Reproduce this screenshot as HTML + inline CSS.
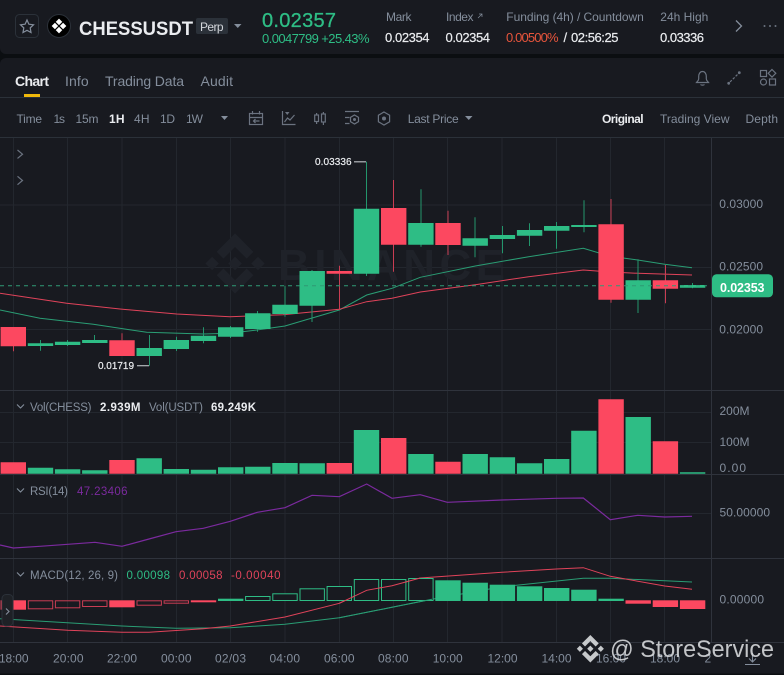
<!DOCTYPE html>
<html><head><meta charset="utf-8"><title>CHESSUSDT</title>
<style>
html,body{margin:0;padding:0;background:#0b0e11;width:784px;height:675px;overflow:hidden}
svg{display:block;font-family:"Liberation Sans",sans-serif}
.g{fill:#848e9c}.w{fill:#eaecef}.gr{fill:#2ebd85}.r{fill:#f6465d}
.s12{font-size:12px}.s11{font-size:11.5px}.b{font-weight:bold}
.ic{fill:none;stroke:#6b7380;stroke-width:1.2}
</style></head><body>
<svg width="784" height="675" viewBox="0 0 784 675" xmlns="http://www.w3.org/2000/svg">
<rect width="784" height="675" fill="#0b0e11"/>
<path d="M0 0H784V54H6a6 6 0 0 1-6-6z" fill="#181a20"/>
<path d="M6 58H784V673.5H0V64a6 6 0 0 1 6-6z" fill="#181a20"/>

<!-- header -->
<rect x="15.5" y="14.5" width="23" height="23" rx="4" fill="none" stroke="#2b3139"/>
<polygon points="27,20 28.9,24.2 33.5,24.8 30.2,27.9 31,32.5 27,30.3 23,32.5 23.8,27.9 20.5,24.8 25.1,24.2" fill="none" stroke="#848e9c" stroke-width="1.2"/>
<circle cx="59" cy="26" r="11.5" fill="#000" stroke="#2b3139"/>
<g fill="#fff"><rect x="56.7" y="19.6" width="4.6" height="4.6" transform="rotate(45 59 21.9)"/><rect x="56.7" y="27.8" width="4.6" height="4.6" transform="rotate(45 59 30.1)"/><rect x="52.6" y="23.7" width="4.6" height="4.6" transform="rotate(45 54.9 26)"/><rect x="60.8" y="23.7" width="4.6" height="4.6" transform="rotate(45 63.1 26)"/></g>
<text x="79" y="35" font-size="19" class="b" fill="#eaecef" textLength="114" lengthAdjust="spacingAndGlyphs">CHESSUSDT</text>
<rect x="196" y="18" width="32" height="16" rx="2" fill="#2b3139"/>
<text x="200" y="31" class="s12" fill="#d3d6db" textLength="23.5">Perp</text>
<path d="M234 24h7.5l-3.75 4z" fill="#848e9c"/>
<text x="262" y="27" font-size="20" class="gr" stroke="#2ebd85" stroke-width=".3" textLength="74">0.02357</text>
<text x="262" y="43" font-size="13" class="gr" textLength="107.5">0.0047799 +25.43%</text>
<text x="386" y="21" class="g s12" textLength="25.5">Mark</text>
<text x="385" y="42" font-size="13" class="w" stroke="#eaecef" stroke-width=".2" textLength="44.5">0.02354</text>
<text x="446" y="21" class="g s12" textLength="27.5">Index</text>
<path d="M478 18l4-4M479 14h3v3" fill="none" stroke="#848e9c" stroke-width=".7"/>
<text x="445.5" y="42" font-size="13" class="w" stroke="#eaecef" stroke-width=".2" textLength="44.5">0.02354</text>
<text x="506.3" y="21" class="g s12" textLength="137.5">Funding (4h) / Countdown</text>
<text x="506" y="42" font-size="13" fill="#e8553c" textLength="52.5">0.00500%</text>
<text x="563.5" y="42" font-size="13" class="w" stroke="#eaecef" stroke-width=".2">/</text>
<text x="571" y="42" font-size="13" class="w" stroke="#eaecef" stroke-width=".2" textLength="47.5">02:56:25</text>
<text x="660.3" y="21" class="g s12" textLength="48">24h High</text>
<text x="660" y="42" font-size="13" class="w" stroke="#eaecef" stroke-width=".2" textLength="44">0.03336</text>
<path d="M736 20.5l5.5 5.5-5.5 5.5" fill="none" stroke="#848e9c" stroke-width="1.3"/>
<g fill="#6b7380"><circle cx="764.5" cy="26" r="1"/><circle cx="770" cy="26" r="1"/><circle cx="775.5" cy="26" r="1"/></g>

<!-- tabs -->
<text x="15" y="86" font-size="14" class="w b" textLength="34">Chart</text>
<text x="65" y="86" font-size="14" class="g" textLength="23.7">Info</text>
<text x="105" y="86" font-size="14" class="g" textLength="79">Trading Data</text>
<text x="200.5" y="86" font-size="14" class="g" textLength="32.5">Audit</text>
<rect x="24" y="94" width="16" height="3" fill="#f0b90b"/>
<rect x="0" y="97" width="784" height="1" fill="#2b3139"/>
<g fill="none" stroke="#6b7380" stroke-width="1.2">
<path d="M696.5 82.5c.7-1 2.2-2 2.2-3.6v-2.4c0-2.7 1.4-5 3.8-5s3.8 2.3 3.8 5v2.4c0 1.600 1.500 2.600 2.200 3.600zM700.500 84.500c.8.800 3.200.800 4 0"/>
<path d="M730 82l8-8" stroke-dasharray="2.500 1.500"/>
<rect x="760.500" y="70.500" width="6" height="6"/><path d="M772 69.500l3.800 3.800-3.800 3.800-3.800-3.800z"/><circle cx="763.500" cy="82" r="3"/><rect x="769.500" y="79" width="6" height="6"/>
</g>
<g fill="#6b7380"><circle cx="728.700" cy="83.300" r="1.400"/><circle cx="739.300" cy="72.700" r="1.400"/></g>

<!-- toolbar -->
<g class="s12">
<text x="16.500" y="123" class="g" textLength="25.500">Time</text>
<text x="53.500" y="123" class="g" textLength="11.500">1s</text>
<text x="75.500" y="123" class="g" textLength="23">15m</text>
<text x="109" y="123" class="w b" textLength="15.500">1H</text>
<text x="134" y="123" class="g" textLength="15.500">4H</text>
<text x="160" y="123" class="g" textLength="15">1D</text>
<text x="186" y="123" class="g" textLength="17">1W</text>
<text x="407.700" y="123" class="g" textLength="51">Last Price</text>
<text x="602" y="123" class="w b" textLength="41.600">Original</text>
<text x="660" y="123" class="g" textLength="69.500">Trading View</text>
<text x="745.500" y="123" class="g" textLength="32.500">Depth</text>
</g>
<path d="M221 116h7l-3.500 4z" fill="#848e9c"/>
<path d="M465 116h7.500l-3.750 4z" fill="#848e9c"/>
<g class="ic">
<rect x="249.500" y="113.500" width="13" height="11"/><path d="M249.500 117.500h13M252.500 111v3.500M259.500 111v3.500M259.500 121h-6M255.500 119l-2 2 2 2"/>
<path d="M282.500 111v13.500h13M284.500 122l3-4 2.500 2 4.500-5"/>
<rect x="314.700" y="115" width="3.800" height="6.500"/><path d="M316.600 113v2M316.600 121.500v2.500"/><rect x="321.500" y="114" width="3.800" height="8"/><path d="M323.400 112v2M323.400 122v3"/>
<path d="M345 111.500h14M345 117.500h4.500M345 123.500h4.500"/><polygon points="354.500,115 358.500,117.300 358.500,121.700 354.500,124 350.500,121.700 350.500,117.300"/>
<polygon points="384,112 389.600,115.200 389.600,121.800 384,125 378.400,121.800 378.400,115.200"/>
</g>
<path d="M285 112h4.500l-2.250 3z" fill="#6b7380"/>
<circle cx="354.500" cy="119.500" r="1.500" fill="#6b7380"/><circle cx="384" cy="118.500" r="2" fill="#6b7380"/>
<rect x="0" y="137" width="784" height="1" fill="#2b3139"/>

<!-- grid -->
<path d="M13.500 138V642M67.500 138V642M122 138V642M176.500 138V642M230.500 138V642M285 138V642M339.500 138V642M393.500 138V642M447.500 138V642M502 138V642M556.500 138V642M610.500 138V642M664.500 138V642M0 205H711M0 267.500H711M0 329.500H711M0 412.500H711M0 442.500H711M0 513.500H711" stroke="#23272e" stroke-width="1" fill="none"/>
<path d="M0 390.500H784M0 474.500H784M0 558.500H784M0 642.500H784M711.500 138V642" stroke="#2f333c" stroke-width="1" fill="none"/>

<!-- watermark -->
<path transform="translate(205.600 234.100) scale(.46)" fill="#1f2229" d="M38.730 53.200L64 27.950l25.280 25.280 14.700-14.700L64-1.450 24.030 38.500l14.700 14.700zM-.5 64l14.700-14.700L28.900 64 14.200 78.700zm39.230 10.800L64 100.050l25.280-25.280 14.710 14.700L64 129.450 24.030 89.500l-.02-.02 14.720-14.680zM99.100 64l14.700-14.700 14.700 14.700-14.700 14.700zM78.910 64L64 49.090 53 60.100l-1.270 1.260-2.600 2.600L64 78.920 78.910 64z"/>
<text x="278" y="280" font-size="44" class="b" fill="#1f2229" textLength="227">BINANCE</text>

<!-- MA lines -->
<polyline fill="none" stroke="#2a9d74" stroke-width="1" points="0,310 40,318.300 93.300,324.300 146.700,332.300 203.300,334 230,333.300 256.700,330 285,326 339.300,310 366.700,295 392,288.300 420.300,277.300 475.300,266 528.700,256.700 583.300,248.300 610.300,256.300 637.700,260 664.700,264.300 692,267.700"/>
<polyline fill="none" stroke="#e0435a" stroke-width="1" points="0,293.300 66.700,303.300 120,309 176.700,314 230,316.700 283,314.700 339.300,309.300 366.700,301.700 392,298.300 420.300,292 475.300,284.700 528.700,276.700 583.300,270 610.300,272 637.700,273.300 692,275"/>

<!-- wicks -->
<path stroke="#23966c" stroke-width="1" fill="none" d="M40.500 340V350.700M67.500 340V346M94.500 335V343M149.500 335V365.700M176.500 336.700V351M203.500 327.300V343.300M230.500 326V338M257.500 311V331.700M285 285.700V316.700M312 270V322M366.500 161.700V276M421 189.300V246.700M475 217.300V257.300M502.500 226V253.300M529.500 223.300V246M556.500 222V248.700M584 200.300V232.300M638 259.300V313M692.500 283V288.300"/>
<path stroke="#c93d53" stroke-width="1" fill="none" d="M13.500 346V351.300M122 333.300V340.300M339.500 265.700V310M393.500 180V271.700M448 210.700V255M611 199V302.700M665.500 265V303.300"/>

<!-- candle bodies -->
<path fill="#2ebd85" d="M27.800 343.300h25.400v2.700h-25.400zM54.900 341.700h25.400v3.300h-25.400zM82.100 340h25.400v3h-25.400zM136.500 348h25.400v8h-25.400zM163.600 340h25.400v9h-25.400zM190.800 335.700h25.400v5.300h-25.400zM218 327.300h25.400v9.400h-25.400zM245.100 313.300h25.400v15.700h-25.400zM272.300 304.700h25.400v9.300h-25.400zM299.500 271h25.400v34.700h-25.400zM353.800 208.700h25.400v65h-25.400zM408.200 223h25.400v21.700h-25.400zM462.500 238.300h25.400v7.400h-25.400zM489.700 235h25.400v4h-25.400zM516.900 230h25.400v5.700h-25.400zM544 226h25.400v4.700h-25.400zM571.200 225h25.400v2h-25.400zM625.500 280.300h25.400v19.400h-25.400zM679.900 285h25.400v2.700h-25.400z"/>
<path fill="#fc4860" d="M.6 327h25.400v19.300h-25.400zM109.300 340.300h25.400v15.700h-25.400zM326.600 271h25.400v2.700h-25.400zM381 208h25.400v36.700h-25.400zM435.300 223h25.400v22h-25.400zM598.400 224.300h25.400v75.400h-25.400zM652.700 280.300h25.400v8.400h-25.400z"/>

<!-- price line -->
<path d="M0 285.700H707" stroke="#2f9a75" stroke-width="1" stroke-dasharray="4 4" fill="none"/>

<!-- hi/lo -->
<text x="315" y="165" font-size="10" class="w" stroke="#eaecef" stroke-width=".2" textLength="36.500">0.03336</text>
<path d="M354 161.800H366" stroke="#b5b8bd" stroke-width="1.200"/>
<text x="98" y="369" font-size="10" class="w" stroke="#eaecef" stroke-width=".2" textLength="36">0.01719</text>
<path d="M137 365.700H149" stroke="#b5b8bd" stroke-width="1.200"/>

<!-- collapse arrows -->
<path d="M17.500 150l5 4.200-5 4.200M17.500 176.300l5 4.200-5 4.200" fill="none" stroke="#6b7380" stroke-width="1.200"/>

<!-- axis -->
<g class="g s12">
<text x="719.300" y="208" textLength="43.700">0.03000</text>
<text x="719.300" y="270.300" textLength="43.700">0.02500</text>
<text x="719.300" y="333.300" textLength="43.700">0.02000</text>
<text x="719.500" y="415" textLength="30">200M</text>
<text x="719.500" y="446" textLength="30">100M</text>
<text x="719.500" y="472" textLength="26.500">0.00</text>
<text x="719.500" y="516.700" textLength="50.500">50.00000</text>
<text x="719.500" y="603.700" textLength="44.500">0.00000</text>
</g>
<rect x="712" y="274.300" width="61" height="23" rx="4.500" fill="#2ebd85"/>
<text x="720" y="292" font-size="12.500" fill="#fff" class="b" textLength="44.500">0.02353</text>

<!-- volume -->
<path fill="#2ebd85" d="M27.800 467.700h25.400V473.700h-25.400zM54.900 469.300h25.400V473.700h-25.400zM82.100 470.300h25.400V473.700h-25.400zM136.500 458.300h25.400V473.700h-25.400zM163.600 469h25.400V473.700h-25.400zM190.800 469.700h25.400V473.700h-25.400zM218 467.300h25.400V473.700h-25.400zM245.100 466.700h25.400V473.700h-25.400zM272.300 463h25.400V473.700h-25.400zM299.500 463.300h25.400V473.700h-25.400zM353.800 430h25.400V473.700h-25.400zM408.200 454h25.400V473.700h-25.400zM462.500 454h25.400V473.700h-25.400zM489.700 457.300h25.400V473.700h-25.400zM516.900 463.300h25.400V473.700h-25.400zM544 459h25.400V473.700h-25.400zM571.200 430.700h25.400V473.700h-25.400zM625.500 417h25.400V473.700h-25.400zM679.900 472.300h25.400V473.700h-25.400z"/>
<path fill="#fc4860" d="M.6 462.300h25.400V473.700h-25.400zM109.300 460h25.400V473.700h-25.400zM326.600 463h25.400V473.700h-25.400zM381 438h25.400V473.700h-25.400zM435.300 461.700h25.400V473.700h-25.400zM598.400 399.300h25.400V473.700h-25.400zM652.700 441.300h25.400V473.700h-25.400z"/>

<!-- RSI -->
<polyline fill="none" stroke="#7b2a9e" stroke-width="1.200" points="0,545 13.300,548 40,546.300 67.700,544.300 95,542.300 122,546.300 149,539 176,531.700 203.300,528.300 230.300,521.300 257.300,512.300 285,507.700 312,495.300 339.300,496.700 366.700,484 392,498.300 420.300,494.700 447.300,502.300 502,500 556.300,498.300 583.300,498 610.300,519.700 637.700,515.300 664.700,517 692,516.300"/>

<!-- MACD lines -->
<polyline fill="none" stroke="#2a9d74" stroke-width="1" points="0,618.700 122,626 176,628.300 230.300,627.700 285,624.300 339.300,617.700 392,607.300 432,599.300 502,586.700 583.300,578.300 610.300,578.300 692,582"/>
<polyline fill="none" stroke="#e0435a" stroke-width="1" points="0,626 67.700,630.300 122,632.300 149,632.300 203.300,628.700 230.300,626 285,617 339.300,603.300 366.700,590.300 392,585.700 420.300,578 502,572.300 556.300,569 583.300,567.700 610.300,576.300 664.700,586 692,589.300"/>

<!-- MACD hist -->
<g fill="#fc4860">
<rect x=".6" y="600.300" width="25.400" height="9.400"/><rect x="109.300" y="600.300" width="25.400" height="7"/><rect x="190.800" y="600.300" width="25.400" height="2"/><rect x="625.500" y="600.300" width="25.400" height="3.400"/><rect x="652.700" y="600.300" width="25.400" height="6.700"/><rect x="679.900" y="600.300" width="25.400" height="8.700"/>
</g>
<g fill="none" stroke="#c93d53" stroke-width="1">
<rect x="28.300" y="600.800" width="24.400" height="8"/><rect x="55.400" y="600.800" width="24.400" height="7"/><rect x="82.600" y="600.800" width="24.400" height="5.700"/><rect x="137" y="600.800" width="24.400" height="4.400"/><rect x="164.100" y="600.800" width="24.400" height="2.400"/>
</g>
<g fill="#2ebd85">
<rect x="218" y="598.700" width="25.400" height="2.300"/><rect x="435.300" y="580.300" width="25.400" height="20.700"/><rect x="462.500" y="582.700" width="25.400" height="18.300"/><rect x="489.700" y="584.700" width="25.400" height="16.300"/><rect x="516.900" y="586.300" width="25.400" height="14.700"/><rect x="544" y="588" width="25.400" height="13"/><rect x="571.200" y="589.700" width="25.400" height="11.300"/><rect x="598.400" y="598.700" width="25.400" height="2.300"/>
</g>
<g fill="#181a20" stroke="#2ebd85" stroke-width="1">
<rect x="245.600" y="596.500" width="24.400" height="4"/><rect x="272.800" y="593.800" width="24.400" height="6.700"/><rect x="300" y="588.800" width="24.400" height="11.700"/><rect x="327.100" y="586.500" width="24.400" height="14"/><rect x="354.300" y="579.500" width="24.400" height="21"/><rect x="381.500" y="579.500" width="24.400" height="21"/><rect x="408.700" y="578.500" width="24.400" height="22"/>
</g>
<polyline fill="none" stroke="#e0435a" stroke-width="1" points="339.300,603.300 366.700,590.300 392,585.700 420.300,578"/>
<polyline fill="none" stroke="#2a9d74" stroke-width="1" points="339.300,617.700 392,607.300 432,599.300"/>

<!-- side handle -->
<rect x="2" y="594.500" width="11" height="31.500" rx="4" fill="#1e2126" stroke="#2b3139"/>
<path d="M6 608.500l3 3-3 3" fill="none" stroke="#848e9c" stroke-width="1.100"/>

<!-- legends -->
<path d="M17 404.500l3.500 3.500 3.500-3.500M17 488.500l3.500 3.500 3.500-3.500M17 572.500l3.500 3.500 3.500-3.500" fill="none" stroke="#848e9c" stroke-width="1.100"/>
<g class="s11">
<text x="30" y="411" class="g" textLength="61.500">Vol(CHESS)</text>
<text x="100" y="411" class="w b" textLength="40.500">2.939M</text>
<text x="149" y="411" class="g" textLength="54">Vol(USDT)</text>
<text x="211" y="411" class="w b" textLength="45">69.249K</text>
<text x="30" y="495" class="g" textLength="38">RSI(14)</text>
<text x="77" y="495" fill="#7b2a9e" textLength="50.500">47.23406</text>
<text x="30" y="579" class="g" textLength="88">MACD(12, 26, 9)</text>
<text x="126.500" y="579" class="gr" textLength="43.500">0.00098</text>
<text x="179" y="579" fill="#e0435a" textLength="43.500">0.00058</text>
<text x="231" y="579" fill="#e0435a" textLength="49.500">-0.00040</text>
</g>

<!-- time axis -->
<g class="g s12">
<text x="-1" y="662.700" textLength="29.500">18:00</text>
<text x="53" y="662.700" textLength="30.500">20:00</text>
<text x="107" y="662.700" textLength="30">22:00</text>
<text x="161" y="662.700" textLength="30.500">00:00</text>
<text x="215" y="662.700" textLength="31">02/03</text>
<text x="269.500" y="662.700" textLength="30.500">04:00</text>
<text x="324" y="662.700" textLength="30.500">06:00</text>
<text x="378" y="662.700" textLength="30.500">08:00</text>
<text x="432.700" y="662.700" textLength="30">10:00</text>
<text x="487.500" y="662.700" textLength="30">12:00</text>
<text x="541.500" y="662.700" textLength="30">14:00</text>
<text x="596" y="662.700" textLength="30">16:00</text>
<text x="650" y="662.700" textLength="30">18:00</text>
<text x="704.500" y="662.700">2</text>
</g>
<path d="M745 664.500h15M752.500 653v9M749 658.500l3.500 3.500 3.500-3.500" fill="none" stroke="#848e9c" stroke-width="1.100"/>

<!-- overlay watermark -->
<path transform="translate(576.900 635.300) scale(.21)" fill="#d6d8da" fill-opacity=".92" d="M38.730 53.200L64 27.950l25.280 25.280 14.700-14.700L64-1.450 24.030 38.500l14.700 14.700zM-.5 64l14.700-14.700L28.900 64 14.200 78.700zm39.230 10.800L64 100.050l25.280-25.280 14.710 14.700L64 129.450 24.030 89.500l-.02-.02 14.720-14.680zM99.100 64l14.700-14.700 14.700 14.700-14.700 14.700zM78.910 64L64 49.090 53 60.100l-1.270 1.260-2.600 2.600L64 78.920 78.910 64z"/>
<text x="610" y="657" font-size="24" fill="#d6d8da" fill-opacity=".9" textLength="164" lengthAdjust="spacingAndGlyphs">@ StoreService</text>
</svg>
</body></html>
